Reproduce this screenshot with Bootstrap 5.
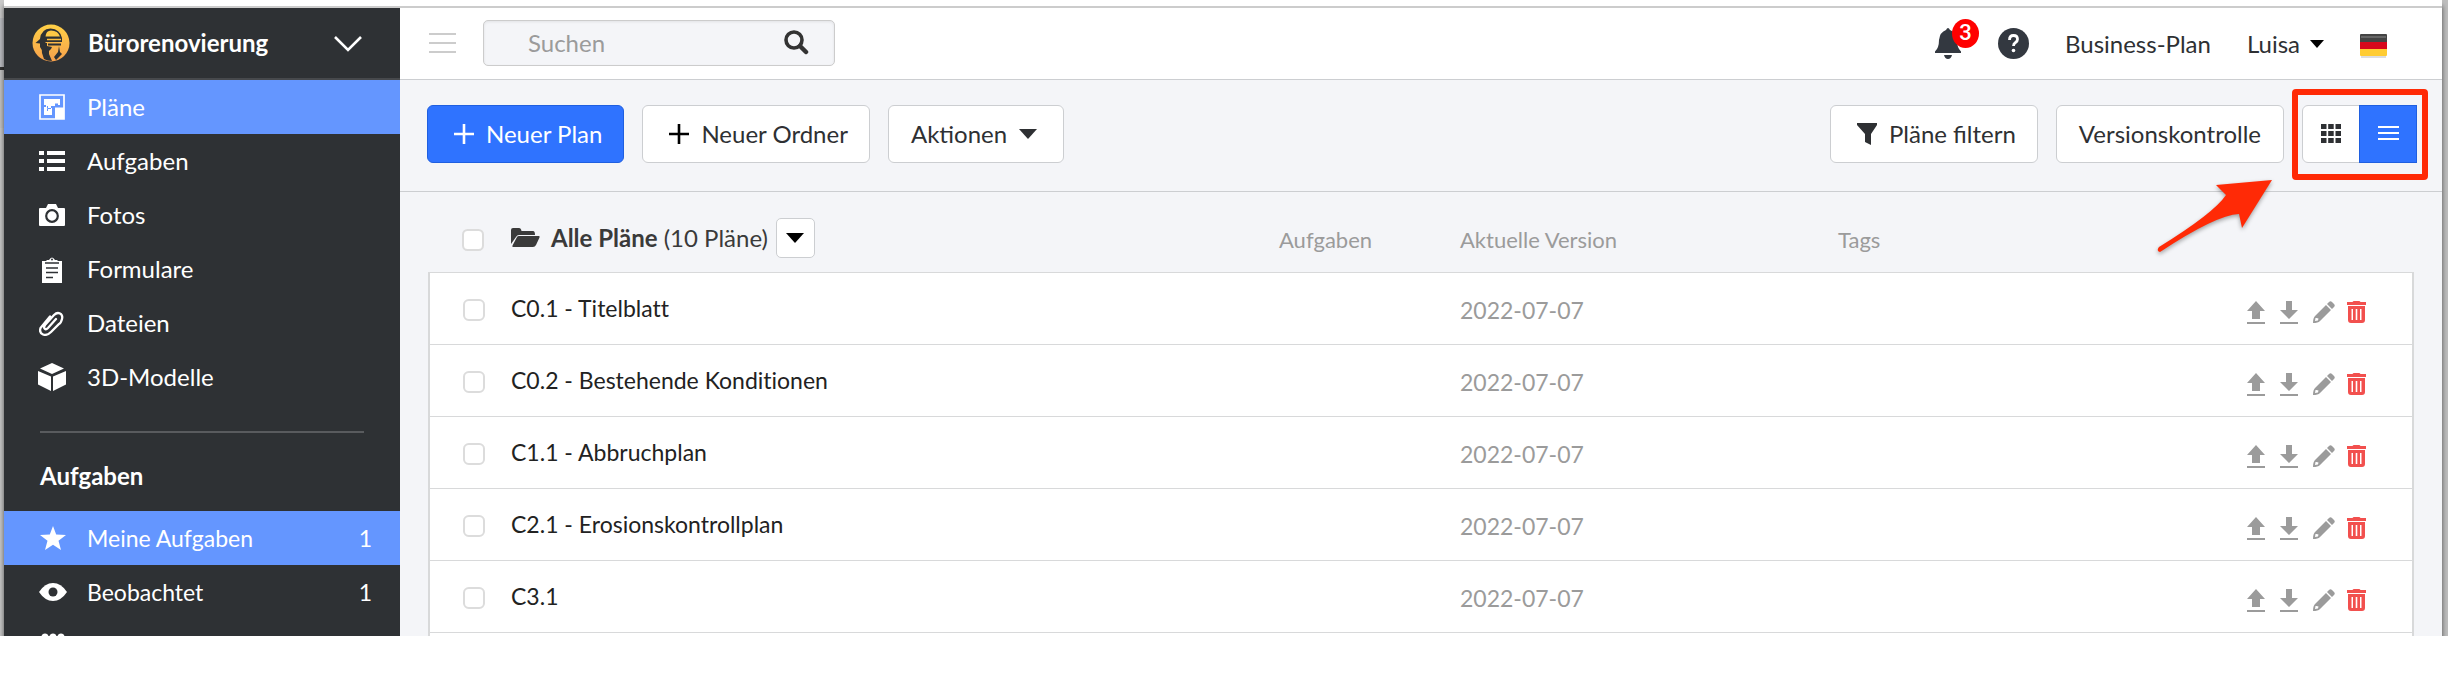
<!DOCTYPE html>
<html lang="de">
<head>
<meta charset="utf-8">
<meta name="viewport" content="width=device-width, initial-scale=1">
<title>Pläne – Bürorenovierung</title>
<link href="https://cdn.jsdelivr.net/npm/bootstrap@5.3.0/dist/css/bootstrap.min.css" rel="stylesheet">
<style>
  :root { --ink:#2e3033; --line:#ccced1; --soft:#f4f5f8; --blue:#2f73ff; --pick:#6496ff; --side:#2e3134; --mark:#ff2a06; }
  body { font-family: Lato, "Liberation Sans", sans-serif; font-size: 24px; line-height: 32px; color: var(--ink); background: #fff; }
  svg { display: block; flex: none; }
  a { color: inherit; text-decoration: none; }
  .desk { height: calc(100vh - 42px); overflow: hidden; padding: 0 6px 0 4px; background: linear-gradient(#c9c9c9 18px, #babcc0 18px 67px, #333 67px 70px, #c0c0c0 70px 128px, #c6c6c6 128px) left/4px 100% no-repeat #bdbdbd; }
  .win { background: #fff; border-top: 2px solid #ccc; margin-top: 6px; height: 100%; box-shadow: 0 -6px 0 #fff, 0 0 5px rgba(0,0,0,.6); }
  .side { width: 396px; background: var(--side); color: #fff; }
  .side-top { height: 72px; padding: 0 38px 0 28px; border-bottom: 2px solid #47494c; }
  .side-top strong { margin-left: 18px; }
  .side-top button { color: #fff; }
  .side .nav-link { height: 54px; padding: 0 28px 0 33px; color: #fff; font-size: 24px; }
  .side .tasks .nav-link { font-size: 23px; }
  .side .nav-link.active { background: var(--pick); }
  .ico { width: 30px; display: flex; justify-content: center; margin-right: 20px; }
  .tasks .ico { width: 32px; margin-right: 18px; }
  .tasks .cut { align-items: flex-start; padding-top: 14px; }
  .side hr { margin: 27px 36px; border-top: 2px solid #6c6e70; opacity: .7; }
  .side h2 { font-size: 24px; line-height: 32px; margin: 0 36px 19px; font-weight: 700; }
  .content { background: var(--soft); }
  .topbar { height: 72px; background: #fff; border-bottom: 1px solid var(--line); padding: 0 55px 0 27px; }
  .finder { width: 352px; margin-left: 27px; margin-bottom: 2px; }
  .finder input { height: 46px; font-size: 24px; background: var(--soft); border: 1px solid #ccc; border-radius: 5px; padding: 0 60px 0 44px; box-shadow: inset 0 1px 3px rgba(0,0,0,.08); }
  .finder input::placeholder { color: #9b9b9b; }
  .finder button { right: 26px; top: 10px; }
  .account { gap: 36px; }
  .account .who { gap: 10px; }
  .account .flag { padding-top: 5px; }
  .plain { border: 0; background: none; padding: 0; color: inherit; }
  .count { left: 18px; top: -9px; width: 27px; height: 29px; border-radius: 50%; background: #f00; color: #fff; font: 500 22px/28px Roboto, sans-serif; text-align: center; }
  .tools { height: 112px; border-bottom: 1px solid var(--line); padding: 0 25px 4px 27px; gap: 18px; }
  .tools .btn { height: 58px; font-size: 24px; border: 1px solid var(--line); background: #fff; color: var(--ink); border-radius: 6px; padding: 0 22px; display: flex; align-items: center; gap: 12px; }
  .tools .btn-icon { padding-left: 26px; padding-right: 21px; }
  .tools .btn-drop { padding-right: 26px; }
  .tools .btn-main { background: var(--blue); border-color: #1f5fe0; color: #fff; }
  .tools .switch .btn { width: 58px; padding: 0; justify-content: center; }
  .frame { left: -10px; right: -11px; top: -16px; bottom: -17px; border: 6px solid var(--mark); border-radius: 4px; pointer-events: none; }
  .pointer { right: 143px; top: 74px; pointer-events: none; filter: drop-shadow(0 2px 2px rgba(0,0,0,.35)); }
  .list { margin: 0 28px; }
  .plans { table-layout: fixed; width: 100%; margin: 0; font-variant-ligatures: none; }
  .plans th { height: 80px; padding: 16px 6px 0; font-weight: 400; font-size: 22px; color: #9b9b9b; vertical-align: middle; }
  .plans td { height: 72px; padding: 3px 6px 0; vertical-align: middle; border-top: 1px solid #d8d9da; background: #fff; color: #9b9b9b; font-size: 23px; }
  .plans tbody { border-left: 2px solid #d8d9da; border-right: 2px solid #d8d9da; }
  .plans .title { color: #222; padding-top: 0; }
  .plans .whole { font-size: 24px; color: #3a3a3a; padding-top: 12px; }
  .plans input { width: 22px; height: 22px; margin: 0 0 0 27px; border: 2px solid #dcdcdc; border-radius: 5px; display: block; }
  .plans .acts { padding: 8px 46px 0 0; }
  .acts div { gap: 15px; justify-content: flex-end; }
  .acts .pen { margin-right: -3px; }
  .folder { margin-right: 11px; }
  .more { width: 39px; height: 40px; margin-left: 8px; border: 1px solid var(--line); border-radius: 5px; background: #fff; display: flex; align-items: center; justify-content: center; }
</style>
</head>
<body>
<svg width="0" height="0" class="position-absolute" aria-hidden="true">
  <symbol id="up" viewBox="0 0 18 23"><path d="M9 0l9 10h-5v8H5v-8H0z"/><path d="M0 21h18v2H0z"/></symbol>
  <symbol id="down" viewBox="0 0 18 23"><path d="M9 18l9-9h-6V0H6v9H0z"/><path d="M0 21h18v2H0z"/></symbol>
  <symbol id="pen" viewBox="0 0 22 22"><path d="M16 1q1.500-1.500 3 0l2 2q1.500 1.500 0 3l-2 2-5-5zM13 4l5 5L7 20q-2 2-7 2 0-5 2-7zM2.500 17l-.5 3 3-.5.500-2-2-.5z" fill-rule="evenodd"/></symbol>
  <symbol id="bin" viewBox="0 0 19 22"><path d="M5.500 1Q6 0 7 0h5q1 0 1.500 1H19v3H0V1zM1 5h17v14q0 3-3 3H4q-3 0-3-3zM4.500 8v11H6V8zm4.200 0v11h1.600V8zm4.300 0v11h1.500V8z" fill-rule="evenodd"/></symbol>
  <symbol id="plus" viewBox="0 0 20 20"><path d="M8.700 0h2.600v8.700H20v2.600h-8.700V20H8.700v-8.700H0V8.700h8.700z"/></symbol>
  <symbol id="caret" viewBox="0 0 18 10"><path d="M0 0h18l-9 10z"/></symbol>
</svg>

<div class="desk">
  <div class="win d-flex">
    <aside class="side flex-shrink-0">
      <div class="side-top d-flex align-items-center">
        <svg width="38" height="38" viewBox="0 0 38 38"><defs><linearGradient id="sun" x2="0" y2="1"><stop stop-color="#ffd046"/><stop offset="1" stop-color="#f7a04c"/></linearGradient></defs><circle cx="19" cy="19" r="18.500" fill="url(#sun)"/><path d="M3.500 19L8 15Q9 5 18.500 4.500 28 5 30 14v4H14l-2 2z" fill="#2e3134"/><path d="M13.500 12.500Q14 6.500 19 6.500q7 0 9 6z" fill="#ffc945"/><path d="M15 15.500h14" stroke="#ffc03f" stroke-width="1.500"/><path d="M8 19h7v3l5 1-1 2-2 2v3l3 7q-5 0-8-2l-2-6q0-4-2-6z" fill="#2e3134"/><path d="M16 19.500h13v2H16zM27 22l-1 6-4 5 2 3 6-6-2-2z" fill="#2e3134"/></svg>
        <strong class="flex-grow-1">Bürorenovierung</strong>
        <button class="plain" aria-label="Projekt wechseln"><svg width="28" height="17" viewBox="0 0 28 17" fill="none" stroke="#fff" stroke-width="2.600"><path d="M1 2l13 13L27 2"/></svg></button>
      </div>
      <nav class="nav flex-column flex-nowrap">
        <a class="nav-link active d-flex align-items-center" href="#"><span class="ico"><svg width="26" height="26" viewBox="0 0 26 26"><path d="M1 1h24v24H1z" fill="none" stroke="#fff" stroke-width="1.700"/><path d="M5 5h16v6h-2V9.500h-3V12h-4v2h1v7H5v-8h2v-2H5z" fill="#fff"/><path d="M8.500 12v2.500h3.500M8.500 15v2M15 24V13h6" fill="none" stroke="#6496ff" stroke-width="1"/><path d="M16 13.500h9V25h-9z" fill="#fff"/></svg></span>Pläne</a>
        <a class="nav-link d-flex align-items-center" href="#"><span class="ico"><svg width="26" height="20" viewBox="0 0 26 20" fill="#fff"><path d="M0 0h5v4H0zM8 0h18v4H8zM0 8h5v4H0zM8 8h18v4H8zM0 16h5v4H0zM8 16h18v4H8z"/></svg></span>Aufgaben</a>
        <a class="nav-link d-flex align-items-center" href="#"><span class="ico"><svg width="26" height="22" viewBox="0 0 26 22"><path d="M1 4h6l2-4h8l2 4h6q1 0 1 1v16q0 1-1 1H1q-1 0-1-1V5q0-1 1-1z" fill="#fff"/><circle cx="13" cy="12" r="5.800" fill="none" stroke="#2e3134" stroke-width="2.200"/></svg></span>Fotos</a>
        <a class="nav-link d-flex align-items-center" href="#"><span class="ico"><svg width="20" height="27" viewBox="0 0 20 27"><path d="M0 5h4l1-1h2q3-5 6 0h2l1 1h4v22H0z" fill="#fff"/><path d="M3 7h14M4 12h12M4 16.500h12M4 21.500h7" stroke="#2e3134" stroke-width="1.500"/><circle cx="10" cy="3.500" r="1" fill="#2e3134"/></svg></span>Formulare</a>
        <a class="nav-link d-flex align-items-center" href="#"><span class="ico"><svg width="26" height="26" viewBox="0 0 26 26" fill="none" stroke="#fff" stroke-width="2.300" stroke-linecap="round"><path d="M17 9l-8 9q-2 2-3.300.7T6 15L15 5q3-3 6-1.500t2 5.500-3 5l-8 8q-4 4-8 2.500t-2.500-6.500L11 6.500"/></svg></span>Dateien</a>
        <a class="nav-link d-flex align-items-center" href="#"><span class="ico"><svg width="28" height="28" viewBox="0 0 28 28" fill="#fff"><path d="M14 0l12 5.500L14 11 2 5.500zM0 8l13 5.500V28L0 21.500zM28 8l-13 5.500V28l13-6.500z"/></svg></span>3D-Modelle</a>
      </nav>
      <hr>
      <h2>Aufgaben</h2>
      <nav class="nav tasks flex-column flex-nowrap">
        <a class="nav-link active d-flex align-items-center" href="#"><span class="ico"><svg width="26" height="24" viewBox="0 0 26 24" fill="#fff"><path d="M13 0l3.200 8.500L26 9l-7.500 5.800L21 24l-8-5.200L5 24l2.500-9.200L0 9l9.800-.5z"/></svg></span><span class="flex-grow-1">Meine Aufgaben</span><span>1</span></a>
        <a class="nav-link d-flex align-items-center" href="#"><span class="ico"><svg width="28" height="18" viewBox="0 0 28 18"><path d="M0 9Q6 0 14 0t14 9q-6 9-14 9T0 9z" fill="#fff"/><circle cx="14" cy="9" r="4.500" fill="#2e3134"/></svg></span><span class="flex-grow-1">Beobachtet</span><span>1</span></a>
        <a class="nav-link cut d-flex" href="#" aria-label="Team"><span class="ico"><svg width="24" height="24" viewBox="0 0 24 24" fill="#fff"><circle cx="4" cy="4" r="3.500"/><circle cx="12" cy="4" r="3.500"/><circle cx="20" cy="4" r="3.500"/><path d="M0 10h24v12H0z"/></svg></span></a>
      </nav>
    </aside>

    <main class="content flex-grow-1">
      <header class="topbar d-flex align-items-center">
        <button class="plain" aria-label="Menü"><svg width="29" height="22" viewBox="0 0 29 22" fill="#ccc"><path d="M2 0h27v2H2zM2 9h27v2H2zM2 18h27v2H2z"/></svg></button>
        <form class="finder position-relative" role="search">
          <input class="form-control" type="search" placeholder="Suchen" aria-label="Suchen">
          <button class="plain position-absolute" type="button" aria-label="Suche starten"><svg width="26" height="25" viewBox="0 0 26 25" fill="none" stroke="#333"><circle cx="11" cy="10" r="8" stroke-width="3.600"/><path d="M17 16l6 6" stroke-width="4.500" stroke-linecap="round"/></svg></button>
        </form>
        <div class="account ms-auto d-flex align-items-center">
          <button class="plain position-relative" aria-label="Benachrichtigungen"><svg width="28" height="31" viewBox="0 0 28 31" fill="#333840"><path d="M12 2q2-4 4 0 6 2 7 10 0 8 4 11.500V25H1v-1.500q4-3.500 4-11.500 1-8 7-10zM10 27h8q-1 4-4 4t-4-4z"/></svg><span class="count position-absolute">3</span></button>
          <button class="plain" aria-label="Hilfe"><svg width="31" height="31" viewBox="0 0 31 31"><circle cx="15.500" cy="15.500" r="15.500" fill="#333840"/><path d="M11.500 12q0-4.500 4-4.500t4 3.800q0 2-2 3.200t-2 3.500" fill="none" stroke="#fff" stroke-width="2.800"/><circle cx="15.500" cy="22.500" r="1.800" fill="#fff"/></svg></button>
          <a href="#">Business-Plan</a>
          <button class="plain who d-flex align-items-center">Luisa<svg width="14" height="8" viewBox="0 0 14 8"><path d="M0 0h14L7 8z"/></svg></button>
          <button class="plain flag" aria-label="Deutsch"><svg width="27" height="25" viewBox="0 0 27 25"><rect y="22" x="1" width="25" height="2" fill="#ddd"/><path d="M0 1q0-1 1-1h25q1 0 1 1v7H0z" fill="#444"/><path d="M1 2h25v2H1z" fill="#666"/><path d="M0 8h27v7H0z" fill="#d8081c"/><path d="M0 15h27v6q0 1-1 1H1q-1 0-1-1z" fill="#fc3"/></svg></button>
        </div>
      </header>

      <div class="tools d-flex align-items-center">
        <button class="btn btn-main btn-icon"><svg width="20" height="20" fill="#fff"><use href="#plus"/></svg>Neuer Plan</button>
        <button class="btn btn-icon"><svg width="20" height="20"><use href="#plus"/></svg>Neuer Ordner</button>
        <button class="btn btn-drop">Aktionen<svg width="18" height="10" fill="#2e3033"><use href="#caret"/></svg></button>
        <button class="btn btn-icon ms-auto"><svg width="20" height="22" viewBox="0 0 20 22" fill="#2e3033"><path d="M0 0h20v2l-6 9v11l-6-3v-8L0 2z"/></svg>Pläne filtern</button>
        <button class="btn">Versionskontrolle</button>
        <div class="switch btn-group position-relative">
          <button class="btn" aria-label="Kacheln"><svg width="20" height="19" viewBox="0 0 20 19" fill="#2e3033"><path d="M0 0h5.500v5H0zM7.200 0h5.500v5H7.200zM14.500 0H20v5h-5.500zM0 7h5.500v5H0zM7.200 7h5.500v5H7.200zM14.500 7H20v5h-5.500zM0 14h5.500v5H0zM7.200 14h5.500v5H7.200zM14.500 14H20v5h-5.500z"/></svg></button>
          <button class="btn btn-main" aria-label="Liste"><svg width="21" height="15" viewBox="0 0 21 15" fill="#fff"><path d="M0 0h21v2H0zM0 6h21v2H0zM0 12h21v2H0z"/></svg></button>
          <div class="frame position-absolute"></div>
          <svg class="pointer position-absolute" width="120" height="76" viewBox="0 0 120 76"><path d="M118 1L62 6l10 10Q60 34 5 68q-3 4 1 5Q62 36 85 35l3 14z" fill="#ff2a06"/></svg>
        </div>
      </div>

      <div class="list">
        <table class="plans">
          <colgroup><col style="width:76px"><col><col style="width:181px"><col style="width:378px"><col style="width:379px"><col style="width:202px"></colgroup>
          <thead>
            <tr><th><input class="form-check-input" type="checkbox" aria-label="Alle auswählen"></th>
              <th class="whole"><div class="d-flex align-items-center"><svg class="folder" width="29" height="19" viewBox="0 0 29 19" fill="#3a3a3a"><path d="M0 16V2q0-2 2-2h6q2 0 2.500 3H22q2 0 2 4H8q-2 0-3 2zM2 19q-1 0-.5-1.500L6 9q.5-1 2-1h20q1 0 .500 1.500L25 17q-1 2-3 2z"/></svg><span><strong>Alle Pläne</strong> (10 Pläne)</span><button class="more" aria-label="Ordnermenü"><svg width="18" height="10"><use href="#caret"/></svg></button></div></th>
              <th>Aufgaben</th><th>Aktuelle Version</th><th>Tags</th><th></th></tr>
          </thead>
          <tbody id="rows"></tbody>
        </table>
      </div>
    </main>
  </div>
</div>
<script src="https://cdn.jsdelivr.net/npm/bootstrap@5.3.0/dist/js/bootstrap.bundle.min.js"></script>
<script>
  const plans = [
    ['C0.1 - Titelblatt', '2022-07-07'],
    ['C0.2 - Bestehende Konditionen', '2022-07-07'],
    ['C1.1 - Abbruchplan', '2022-07-07'],
    ['C2.1 - Erosionskontrollplan', '2022-07-07'],
    ['C3.1', '2022-07-07']
  ];
  const icon = (id, w, h, color, label) => `<button class="plain ${id}" aria-label="${label}"><svg width="${w}" height="${h}" fill="${color}"><use href="#${id}"/></svg></button>`;
  const acts = '<div class="d-flex align-items-start">' + icon('up', 18, 23, '#9b9b9b', 'Hochladen') + icon('down', 18, 23, '#9b9b9b', 'Herunterladen') + icon('pen', 22, 22, '#9b9b9b', 'Bearbeiten') + icon('bin', 19, 22, '#f2504e', 'Löschen') + '</div>';
  document.getElementById('rows').innerHTML = plans.map(([name, date]) =>
    `<tr><td><input class="form-check-input" type="checkbox" aria-label="${name}"></td><td class="title">${name}</td><td></td><td>${date}</td><td></td><td class="acts">${acts}</td></tr>`
  ).join('') + '<tr><td colspan="6"></td></tr>';
</script>
</body>
</html>
